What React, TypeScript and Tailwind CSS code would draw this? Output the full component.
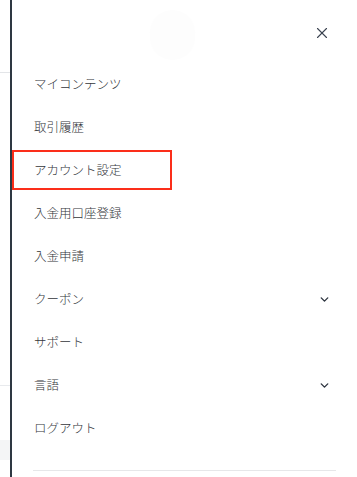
import { ChevronDown, X } from 'lucide-react'

const items = [
  { label: 'マイコンテンツ' },
  { label: '取引履歴' },
  { label: 'アカウント設定', highlight: true },
  { label: '入金用口座登録' },
  { label: '入金申請' },
  { label: 'クーポン', chevron: true },
  { label: 'サポート' },
  { label: '言語', chevron: true },
  { label: 'ログアウト' },
]

export default function App() {
  return (
    <div
      className="relative flex h-[477px] w-full overflow-hidden bg-white"
      style={{ fontFamily: '"Noto Sans CJK JP", "Noto Sans", sans-serif' }}
    >
      {/* page behind the drawer */}
      <div className="flex w-[10px] shrink-0 flex-col">
        <div className="h-[72px]" />
        <div className="h-px bg-[#e3e5e8]" />
        <div className="h-[312px]" />
        <div className="h-px bg-[#e8eaed]" />
        <div className="h-[54px]" />
        <div className="h-[20px] bg-[#f4f5f6]" />
      </div>
      <div className="absolute left-[10px] top-[440px] h-[20px] w-[18px] bg-[#fafafa]" />

      <aside className="relative flex flex-1 flex-col border-l-2 border-[#2e3842] bg-white">
        <div className="relative flex h-[63px] items-center justify-end pr-[26px]">
          <div className="absolute left-[138px] top-[10px] h-[50px] w-[45px] rounded-full bg-[#fdfdfd]" />
          <button type="button" className="relative mt-[3px] text-[#3b4350]">
            <X className="h-[18px] w-[18px]" strokeWidth={1.5} />
          </button>
        </div>

        <nav className="flex flex-col">
          {items.map((item) => (
            <div key={item.label} className="relative flex h-[43px] items-center pl-[22px] pr-[26px]">
              {item.highlight ? (
                <div className="absolute left-0 top-px h-[40px] w-[160px] border-2 border-[#fb2e1a]" />
              ) : null}
              <span className="flex-1 text-[12.5px] font-light text-[#33363b]">{item.label}</span>
              {item.chevron ? <ChevronDown className="h-[13px] w-[13px] text-[#2e3540]" strokeWidth={2.6} /> : null}
            </div>
          ))}
        </nav>

        <div className="mx-[21px] mt-[20px] h-px bg-[#e6e7e9]" />
      </aside>
    </div>
  )
}
